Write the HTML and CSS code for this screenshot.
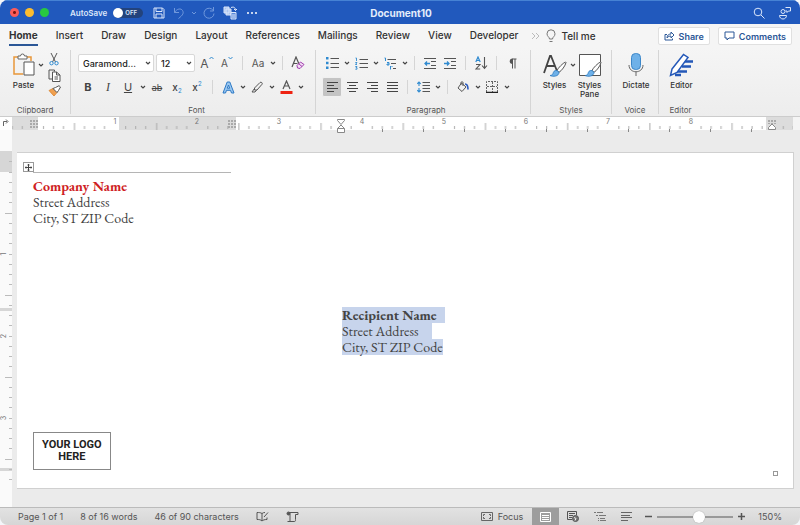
FILE: index.html
```
<!DOCTYPE html>
<html lang="en">
<head>
    <meta charset="UTF-8">
    <meta name="viewport" content="width=device-width, initial-scale=1.0">
    <title>Document10</title>
    <link rel="stylesheet" href="styles.css">
</head>
<body>
    <!-- shared symbols -->
    <svg class="symbols" aria-hidden="true">
        <symbol id="chev" viewBox="0 0 6 6"><path d="M1 2l2 2 2-2" fill="none" stroke="#444" stroke-width="1.2"/></symbol>
        <symbol id="brush" viewBox="0 0 18 16">
            <path d="M16.500 1C14 2 9 7 8 9.500l2 1.800C12.500 10 16.500 4.500 17 1.500z" fill="#fff" stroke="#555"/>
            <path d="M8 9.500C5 9 4.500 11 4 12.500 3.500 14 2 14.500 1 14.500c3 1.500 9 1 9-3.200z" fill="#6fb1e8" stroke="#2878c0" stroke-width=".8"/>
        </symbol>
    </svg>

    <div class="window">
        <header class="titlebar">
            <div class="title-left">
                <div class="lights">
                    <button class="light red" aria-label="Close"></button>
                    <button class="light yellow" aria-label="Minimize"></button>
                    <button class="light green" aria-label="Zoom"></button>
                </div>
                <label class="autosave">AutoSave
                    <span class="switch"><input type="checkbox"><span>OFF</span></span>
                </label>
                <div class="quick">
                    <button aria-label="Save"><svg width="12" height="12" viewBox="0 0 12 12" fill="none" stroke="#dce7fa"><path d="M1 1h8.500L11 2.500V11H1zM3 1v3.500h6V1M3 11V7h6v4"/></svg></button>
                    <button aria-label="Undo"><svg width="12" height="12" viewBox="0 0 12 12" fill="none" stroke="#7098dc"><path d="M1.500 1v4.500H6M1.500 5.500C4 1.500 8 1 9.500 3.500S10 8 5.500 11.500"/></svg></button>
                    <button class="narrow" aria-label="Undo history"><svg width="6" height="6" viewBox="0 0 6 6" fill="none" stroke="#7098dc"><path d="M1 2l2 2 2-2"/></svg></button>
                    <button aria-label="Redo"><svg width="12" height="12" viewBox="0 0 12 12" fill="none" stroke="#7098dc"><path d="M10.500 0v4H7M10.200 3.500A5 5 0 1 0 11 6.500"/></svg></button>
                    <button aria-label="Paste pages"><svg width="14" height="14" viewBox="0 0 14 14" fill="none" stroke="#dce7fa"><path d="M1 1h5v6H1zM3 3h5v6H3z" fill="#a9c4f0"/><path d="M8 6.500h5V13H8z" fill="#5d8ad8"/><path d="M9 9h3M9 11h3M8 1.500c3-1 4.500 0 4.500 3M11 3l1.500 1.500L14 3"/></svg></button>
                    <button aria-label="More"><svg width="12" height="4" viewBox="0 0 12 4" fill="#fff"><circle cx="2" cy="2" r="1"/><circle cx="6" cy="2" r="1"/><circle cx="10" cy="2" r="1"/></svg></button>
                </div>
            </div>
            <h1 class="doc-title">Document10</h1>
            <div class="title-right">
                <button aria-label="Search"><svg width="12" height="12" viewBox="0 0 12 12" fill="none" stroke="#dce7fa"><circle cx="5" cy="5" r="3.800"/><path d="M8 8l3.500 3.500"/></svg></button>
                <button aria-label="Account"><svg width="14" height="14" viewBox="0 0 14 14" fill="none" stroke="#dce7fa"><circle cx="5" cy="5.500" r="2"/><path d="M1.500 9.500h7c0 2-1.500 3.500-3.500 3.500s-3.500-1.500-3.500-3.500zM7.500 1.500h5v3.500h-2L9 6.500V5H7.500"/></svg></button>
            </div>
        </header>

        <nav class="tabs">
            <a class="tab active" href="#home">Home</a>
            <a class="tab" href="#insert">Insert</a>
            <a class="tab" href="#draw">Draw</a>
            <a class="tab" href="#design">Design</a>
            <a class="tab" href="#layout">Layout</a>
            <a class="tab" href="#references">References</a>
            <a class="tab" href="#mailings">Mailings</a>
            <a class="tab" href="#review">Review</a>
            <a class="tab" href="#view">View</a>
            <a class="tab" href="#developer">Developer</a>
            <button class="tell-me">
                <svg width="9" height="8" viewBox="0 0 9 8" fill="none" stroke="#bbb"><path d="M1 1l3 3-3 3M5 1l3 3-3 3"/></svg>
                <svg width="10" height="14" viewBox="0 0 10 14" fill="none" stroke="#777"><path d="M3.500 10C3.500 8 1 7.500 1 4.800a4 4 0 0 1 8 0C9 7.500 6.500 8 6.500 10zM3.500 12.500h3"/></svg>
                Tell me
            </button>
            <div class="tab-actions">
                <button class="pill"><svg width="11" height="10" viewBox="0 0 11 10" fill="none" stroke="#2b5797"><path d="M3 3.500H1V9h7.500V7.500M3 7c0-3 2-4 4-4V1l3 3-3 3V5C5.500 5 4 5.500 3 7z"/></svg>Share</button>
                <button class="pill"><svg width="11" height="10" viewBox="0 0 11 10" fill="none" stroke="#2b5797"><path d="M1 1h9v6H5L3 9V7H1z"/></svg>Comments</button>
            </div>
        </nav>

        <section class="ribbon">
            <div class="group clipboard">
                <div class="group-body">
                    <button class="big">
                        <svg width="24" height="24" viewBox="0 0 24 24" fill="none"><path d="M6 4H2v17h9M15 4h4v4" stroke="#e8973a" stroke-width="1.500"/><path d="M6 6V3h2.500a2 2 0 0 1 4 0H15v3z" fill="#fff" stroke="#666"/><path d="M12 9h10v13H12z" fill="#fff" stroke="#555"/></svg>
                        Paste
                    </button>
                    <svg class="chev big-chev"><use href="#chev"/></svg>
                    <div class="stack">
                        <button aria-label="Cut"><svg width="12" height="13" viewBox="0 0 12 13" fill="none"><path d="M3 0l4.500 9M9 0L4.500 9" stroke="#555"/><circle cx="3.500" cy="10.200" r="1.700" stroke="#2f8ad0"/><circle cx="8.500" cy="10.200" r="1.700" stroke="#2f8ad0"/></svg></button>
                        <button aria-label="Copy"><svg width="13" height="13" viewBox="0 0 13 13" fill="none" stroke="#555"><path d="M4.500 10H1V1h5.500v1.500"/><path d="M4.500 3h4L12 6v6.500H4.500zM8.500 3v3H12M6.500 8H10M6.500 10H10" fill="#fff"/></svg></button>
                        <button aria-label="Format painter"><svg width="13" height="12" viewBox="0 0 13 12"><path d="M1 5.500l5 5.500 3-3.500-4-4z" fill="#f0a050" stroke="#d9822b" stroke-width=".8"/><path d="M5 3.500l4 4 1.500-2L12.500 2 11 .7 7.500 2.500z" fill="#fff" stroke="#555"/></svg></button>
                    </div>
                </div>
                <p class="group-label">Clipboard</p>
            </div>

            <div class="group font">
                <div class="group-rows">
                    <div class="row">
                        <span class="combo family"><select aria-label="Font"><option>Garamond...</option></select><svg class="chev"><use href="#chev"/></svg></span>
                        <span class="combo size"><select aria-label="Font size"><option>12</option></select><svg class="chev"><use href="#chev"/></svg></span>
                        <button class="tool glyph" aria-label="Increase font size">A<svg width="5" height="9" viewBox="0 0 5 9" fill="none" stroke="#2f8ad0"><path d="M.5 3l2-2 2 2"/></svg></button>
                        <button class="tool glyph small" aria-label="Decrease font size">A<svg width="5" height="9" viewBox="0 0 5 9" fill="none" stroke="#2f8ad0"><path d="M.5 1l2 2 2-2"/></svg></button>
                        <i class="sep"></i>
                        <button class="tool glyph small" aria-label="Change case">Aa</button><svg class="chev"><use href="#chev"/></svg>
                        <i class="sep"></i>
                        <button class="tool" aria-label="Clear formatting"><svg width="14" height="14" viewBox="0 0 14 14" fill="none"><path d="M1 11l4-10 3 7M2.500 7.500h4" stroke="#555" stroke-width="1.200"/><path d="M6 9.500L9.500 6 13 8.500 9 12.500 6.500 12z" fill="#f3ddf5" stroke="#a03cae"/><path d="M8 8l3 2.500" stroke="#a03cae"/></svg></button>
                    </div>
                    <div class="row">
                        <button class="tool letter bold">B</button>
                        <button class="tool letter italic">I</button>
                        <button class="tool letter under">U</button><svg class="chev"><use href="#chev"/></svg>
                        <button class="tool letter strike">ab</button>
                        <button class="tool letter script" aria-label="Subscript">x<sub>2</sub></button>
                        <button class="tool letter script" aria-label="Superscript">x<sup>2</sup></button>
                        <i class="sep"></i>
                        <button class="tool" aria-label="Text effects"><svg width="13" height="13" viewBox="0 0 13 13"><path d="M1 12L5.200 1h2.600L12 12H9.500l-1-2.700h-4L3.500 12zM5.300 7.200h2.400L6.500 4z" fill="#9cc8f0" stroke="#2b78c5"/></svg></button><svg class="chev"><use href="#chev"/></svg>
                        <button class="tool" aria-label="Highlight"><svg width="13" height="12" viewBox="0 0 13 12" fill="none" stroke="#555"><path d="M3.500 7L9 1.500c1-1 3 .5 2 1.800L6 9H3.500zM3.500 7.500L1 11h3l1.500-2"/></svg></button><svg class="chev"><use href="#chev"/></svg>
                        <button class="tool" aria-label="Font color"><svg width="13" height="14" viewBox="0 0 13 14" fill="none"><path d="M3 9l3.500-8L10 9M4.200 6h4.600" stroke="#555" stroke-width="1.200"/><path d="M.5 11h12v3H.5z" fill="#ee2312"/></svg></button><svg class="chev"><use href="#chev"/></svg>
                    </div>
                </div>
                <p class="group-label">Font</p>
            </div>

            <div class="group paragraph">
                <div class="group-rows">
                    <div class="row">
                        <button class="tool" aria-label="Bullets"><svg width="13" height="12" viewBox="0 0 13 12"><path d="M0 0h2.500v2.500H0zM0 4.800h2.500v2.500H0zM0 9.500h2.500V12H0z" fill="#2f8ad0"/><path d="M4.500 1.500H13M4.500 6.500H13M4.500 10.500H13" stroke="#555"/></svg></button><svg class="chev"><use href="#chev"/></svg>
                        <button class="tool" aria-label="Numbering"><svg width="13" height="13" viewBox="0 0 13 13" fill="none"><path d="M.5 1h1v3M.3 5.500h1.700L.5 7.500H2M.3 9.500H2l-1 1.200h1v1.500H.3" stroke="#2f8ad0" stroke-width=".9"/><path d="M4.500 2.500H13M4.500 6.500H13M4.500 10.500H13" stroke="#555"/></svg></button><svg class="chev"><use href="#chev"/></svg>
                        <button class="tool" aria-label="Multilevel list"><svg width="13" height="13" viewBox="0 0 13 13" fill="none"><path d="M.5 1h1v3M3 5.500h2V8H3V7h2M6.500 9v3.500M8 9v1" stroke="#2f8ad0"/><path d="M3.500 2.500H12M7 6.500h5M9 11.500h3" stroke="#555"/></svg></button><svg class="chev"><use href="#chev"/></svg>
                        <i class="sep"></i>
                        <button class="tool" aria-label="Decrease indent"><svg width="12" height="11" viewBox="0 0 12 11" fill="none"><path d="M0 .5h12M7 3.500h5M7 7.500h5M0 10.500h12" stroke="#555"/><path d="M6 5.500H1M3 3.500l-2 2 2 2" stroke="#2f8ad0" stroke-width="1.300"/></svg></button>
                        <button class="tool" aria-label="Increase indent"><svg width="12" height="11" viewBox="0 0 12 11" fill="none"><path d="M0 .5h12M7 3.500h5M7 7.500h5M0 10.500h12" stroke="#555"/><path d="M0 5.500h5M3 3.500l2 2-2 2" stroke="#2f8ad0" stroke-width="1.300"/></svg></button>
                        <i class="sep"></i>
                        <button class="tool" aria-label="Sort"><svg width="13" height="14" viewBox="0 0 13 14" fill="none"><path d="M.8 6L3 1l2.200 5M1.500 4.500h3" stroke="#2f8ad0" stroke-width="1.200"/><path d="M1 8.500h4L1 13h4.200M9.500 1v11M7 9.500l2.500 2.800L12 9.500" stroke="#555" stroke-width="1.100"/></svg></button>
                        <i class="sep"></i>
                        <button class="tool" aria-label="Show marks"><svg width="9" height="11" viewBox="0 0 9 11"><path d="M4 1h4.500M4.500 1v9.500M7 1v9.500" stroke="#555"/><path d="M4.500.5v5.500a2.750 2.750 0 0 1 0-5.500z" fill="#555"/></svg></button>
                    </div>
                    <div class="row">
                        <button class="tool pressed" aria-label="Align left"><svg width="11" height="11" viewBox="0 0 11 11" stroke="#444"><path d="M0 .5h11M0 3.500h7M0 6.500h11M0 9.500h7"/></svg></button>
                        <button class="tool" aria-label="Center"><svg width="11" height="11" viewBox="0 0 11 11" stroke="#444"><path d="M0 .5h11M2 3.500h7M0 6.500h11M2 9.500h7"/></svg></button>
                        <button class="tool" aria-label="Align right"><svg width="11" height="11" viewBox="0 0 11 11" stroke="#444"><path d="M0 .5h11M4 3.500h7M0 6.500h11M4 9.500h7"/></svg></button>
                        <button class="tool" aria-label="Justify"><svg width="11" height="11" viewBox="0 0 11 11" stroke="#444"><path d="M0 .5h11M0 3.500h11M0 6.500h11M0 9.500h11"/></svg></button>
                        <i class="sep"></i>
                        <button class="tool" aria-label="Line spacing"><svg width="13" height="12" viewBox="0 0 13 12" fill="none"><path d="M5.500 1.500H13M5.500 4.500H13M5.500 7.500H13M5.500 10.500H13" stroke="#555"/><path d="M2 1v4M.3 2.800L2 1l1.700 1.800M2 7v4M.3 9.200L2 11l1.700-1.800" stroke="#2f8ad0" stroke-width="1.100"/></svg></button><svg class="chev"><use href="#chev"/></svg>
                        <i class="sep"></i>
                        <button class="tool" aria-label="Shading"><svg width="12" height="12" viewBox="0 0 12 12" fill="none"><path d="M4.500 2L1 7l4 3.500L9 6zM4 4V1.500C4 .5 6 .5 6 1.500V5" stroke="#555"/><path d="M8 3c2 0 3 1.500 3 5.500" stroke="#2b5bbf" stroke-width="1.600"/></svg></button><svg class="chev"><use href="#chev"/></svg>
                        <button class="tool" aria-label="Borders"><svg width="12" height="12" viewBox="0 0 12 12" fill="none" stroke="#666"><path d="M.5 11V.5h11V11M6.500 1v10M1 5.500h10" stroke-dasharray="2 1"/><path d="M0 11.500h12" stroke="#222" stroke-width="1.500"/></svg></button><svg class="chev"><use href="#chev"/></svg>
                    </div>
                </div>
                <p class="group-label">Paragraph</p>
            </div>

            <div class="group styles">
                <div class="group-body">
                    <button class="big">
                        <svg width="26" height="24" viewBox="0 0 26 24"><path d="M2 20L8 3h1l6 15M4.500 13h8" fill="none" stroke="#444" stroke-width="1.800"/><use href="#brush" x="7" y="8" width="18" height="16"/></svg>
                        Styles
                    </button>
                    <svg class="chev big-chev"><use href="#chev"/></svg>
                    <button class="big">
                        <svg width="26" height="24" viewBox="0 0 26 24"><path d="M2.500 1.500h21v21h-21z" fill="#fff" stroke="#555"/><use href="#brush" x="7" y="8" width="18" height="16"/></svg>
                        <span>Styles<br>Pane</span>
                    </button>
                </div>
                <p class="group-label">Styles</p>
            </div>

            <div class="group voice">
                <div class="group-body">
                    <button class="big">
                        <svg width="26" height="24" viewBox="0 0 26 24" fill="none"><rect x="8.500" y=".5" width="9" height="16" rx="4" fill="#6fb1e8" stroke="#3d87c9"/><path d="M6 12c0 9 14 9 14 0M13 19v4" stroke="#666"/></svg>
                        Dictate
                    </button>
                </div>
                <p class="group-label">Voice</p>
            </div>

            <div class="group editor">
                <div class="group-body">
                    <button class="big">
                        <svg width="26" height="24" viewBox="0 0 26 24" fill="none"><path d="M15 8.500h9M13 13.500h9M8 18.500h10M6 22h6" stroke="#2458b8" stroke-width="2.500"/><path d="M3 16L14.500 1.500l4.500 3L8 19.500 1.500 22.500z" fill="#fff" stroke="#2458b8" stroke-width="1.500"/></svg>
                        Editor
                    </button>
                </div>
                <p class="group-label">Editor</p>
            </div>
        </section>

        <!-- one inch on the rulers is 82 units -->
        <div class="h-ruler">
            <svg width="100%" height="17">
                <defs>
                    <pattern id="inch" x="33" width="82.200" height="17" patternUnits="userSpaceOnUse">
                        <path d="M10.500 9v3M20.500 9v3M30.500 9v3M41.500 6v7M51.500 9v3M61.500 9v3M71.500 9v3" stroke="#aaa"/>
                    </pattern>
                    <pattern id="stops" x="341" width="41" height="17" patternUnits="userSpaceOnUse"><path d="M.5 12v3" stroke="#888"/></pattern>
                    <pattern id="dots" width="3" height="3" patternUnits="userSpaceOnUse"><path d="M0 0h2v2H0z" fill="#aaa"/></pattern>
                </defs>
                <path d="M0 0h793v13H0z" fill="#fff"/>
                <path d="M12 0h26v13H12zM119 0h117v13H119zM766 0h27v13h-27z" fill="#dcdcdc"/>
                <path d="M12 0h781v13H12z" fill="url(#inch)"/>
                <path d="M380 0h380v17H380z" fill="url(#stops)"/>
                <path d="M30 3h8v8h-8zM228 3h8v8h-8zM768 3h8v4h-8z" fill="url(#dots)"/>
                <path d="M3.500 9V4.500H7M6 2.500l2 2-2 2" fill="none" stroke="#666"/>
                <g class="ticks">
                    <text x="115" y="7">1</text><text x="197" y="7">2</text><text x="279" y="7">3</text><text x="362" y="7">4</text>
                    <text x="444" y="7">5</text><text x="526" y="7">6</text><text x="608" y="7">7</text><text x="691" y="7">8</text>
                </g>
                <path d="M337.500 2.500h7v1L341 7.500l-3.500-4zM337.500 15.500v-4L341 8l3.500 3.500v4zM337.500 11.500h7" fill="#fff" stroke="#888"/>
                <path d="M768.500 12.500v-2L772 7l3.500 3.500v2z" fill="#fff" stroke="#888"/>
            </svg>
        </div>

        <main class="workspace">
            <div class="v-ruler">
                <svg width="12" height="100%">
                    <defs>
                        <pattern id="vinch" y="42" width="12" height="82" patternUnits="userSpaceOnUse">
                            <path d="M9 .5h3M9 10.500h3M9 20.500h3M9 30.500h3M5 41.500h7M9 51.500h3M9 61.500h3M9 71.500h3" stroke="#bbb"/>
                        </pattern>
                    </defs>
                    <path d="M0 21h12v21H0zM0 178h12v3H0zM0 338h12v3H0z" fill="#d6d6d6"/>
                    <rect y="31" width="12" height="320" fill="url(#vinch)"/>
                    <g class="ticks">
                        <text transform="translate(6 124) rotate(-90)">1</text>
                        <text transform="translate(6 206) rotate(-90)">2</text>
                        <text transform="translate(6 288) rotate(-90)">3</text>
                    </g>
                </svg>
            </div>
            <article class="page">
                <div class="table-top">
                    <button class="handle" aria-label="Select table"><svg width="7" height="7" viewBox="0 0 7 7" stroke="#444"><path d="M3.500 0v7M0 3.500h7M2.500 1h2M2.500 6h2M1 2.500v2M6 2.500v2"/></svg></button>
                </div>
                <address class="sender">
                    <strong>Company Name</strong><br>
                    Street Address<br>
                    City, ST ZIP Code
                </address>
                <address class="recipient">
                    <span class="name">Recipient Name</span>
                    <span class="street">Street Address</span>
                    <span>City, ST ZIP Code</span>
                </address>
                <div class="page-foot">
                    <div class="logo">YOUR LOGO<br>HERE</div>
                    <span class="table-end"></span>
                </div>
            </article>
        </main>

        <footer class="status">
            <span>Page 1 of 1</span>
            <span>8 of 16 words</span>
            <span>46 of 90 characters</span>
            <button aria-label="Proofing"><svg width="13" height="11" viewBox="0 0 13 11" fill="none" stroke="#555"><path d="M6 10V2.500C4.500 1.500 3 1.500 1 1.500v7c2 0 3.500 0 5 1.500 1-1 2.500-1.500 5-1.500V6.500M6 2.500c1-.8 2-1 3-1M8 6l4-4.500"/></svg></button>
            <button aria-label="Macros"><svg width="13" height="12" viewBox="0 0 13 12" fill="none" stroke="#555"><path d="M3 1.500h9v2H9.500v5M4 2.500v8M1.500 10.500h7c1 0 1-1 1-2"/><circle cx="2.500" cy="2.500" r="1.500" fill="#555"/></svg></button>
            <div class="views">
                <button class="focus"><svg width="12" height="9" viewBox="0 0 12 9" fill="none" stroke="#666"><path d="M.5.5h11v8H.5z"/><path d="M2.500 4V2.500H4M8 2.500h1.500V4M9.500 5v1.500H8M4 6.500H2.500V5"/></svg>Focus</button>
                <button class="view current" aria-label="Print layout"><svg width="11" height="10" viewBox="0 0 11 10" fill="none" stroke="#fff"><path d="M.5.5h10v9H.5zM2 3.500h7M2 5.500h7M2 7.500h7"/></svg></button>
                <button class="view" aria-label="Web layout"><svg width="12" height="11" viewBox="0 0 12 11" fill="none" stroke="#555"><path d="M5 8.500H.5v-8h9V4M2 2.500h6M2 4.500h4M2 6.500h3"/><circle cx="8.500" cy="7.500" r="3" fill="#777"/><path d="M7 6.500l2 1-1 2" stroke="#eee"/></svg></button>
                <button class="view" aria-label="Outline"><svg width="12" height="9" viewBox="0 0 12 9" stroke="#777"><path d="M0 .5h2M3 .5h6M2 3.500h2M5 3.500h7M4 6.500h1M6 6.500h5M4 8.500h1M6 8.500h6"/></svg></button>
                <button class="view" aria-label="Draft"><svg width="11" height="9" viewBox="0 0 11 9" stroke="#666"><path d="M0 .5h11M0 3.500h9M0 5.500h11M0 8.500h7"/></svg></button>
                <button class="step" aria-label="Zoom out"><svg width="7" height="7" viewBox="0 0 7 7"><path d="M0 3.500h7" stroke="#555" stroke-width="1.500"/></svg></button>
                <input class="zoom" type="range" min="10" max="250" value="144" aria-label="Zoom">
                <button class="step" aria-label="Zoom in"><svg width="7" height="7" viewBox="0 0 7 7"><path d="M0 3.500h7M3.500 0v7" stroke="#555" stroke-width="1.500"/></svg></button>
                <span class="percent">150%</span>
            </div>
        </footer>
    </div>
</body>
</html>
```
FILE: styles.css
```
* {
    margin: 0;
    padding: 0;
    box-sizing: border-box;
}

body {
    background: #f4f6fa;
    font-family: Inter, "Liberation Sans", sans-serif;
    font-size: 9px;
    color: #333;
}

button {
    display: flex;
    align-items: center;
    justify-content: center;
    border: none;
    background: none;
    font: inherit;
    color: inherit;
}

svg {
    flex: none;
    display: block;
}

.symbols {
    position: absolute;
    width: 0;
    height: 0;
}

.window {
    display: flex;
    flex-direction: column;
    min-height: 100vh;
    border-radius: 8px;
    overflow: hidden;
    background: #f4f4f4;
}

/* title bar */

.titlebar {
    display: grid;
    grid-template-columns: 1fr auto 1fr;
    align-items: center;
    height: 24px;
    padding: 0 8px 0 10px;
    background: #2159bd;
    border-top: 1px solid #4682d4;
    color: #fff;
}

.title-left,
.title-right,
.lights,
.quick,
.autosave {
    display: flex;
    align-items: center;
}

.lights {
    gap: 6px;
}

.light {
    width: 9px;
    height: 9px;
    border-radius: 50%;
}

.red {
    background: radial-gradient(circle, #7c1410 1px, #fc5b57 2px);
}

.yellow {
    background: #fdbc2e;
}

.green {
    background: #28c840;
}

.autosave {
    gap: 6px;
    margin-left: 21px;
    font-size: 8px;
    font-weight: 600;
    color: #dce7fa;
}

.switch {
    display: grid;
    align-items: center;
    width: 30px;
}

.switch input,
.switch span {
    grid-area: 1 / 1;
}

.switch span {
    padding-left: 12px;
    font-size: 6px;
}

.switch input {
    appearance: none;
    height: 10px;
    border-radius: 5px;
    background: #23437c;
}

.switch input::before {
    content: "";
    display: block;
    width: 10px;
    height: 10px;
    border-radius: 50%;
    background: #fff;
}

.quick {
    margin-left: 6px;
}

.quick button {
    width: 20px;
}

.quick button:nth-last-child(-n+2) {
    width: 22px;
}

.quick .narrow {
    width: 10px;
}

.doc-title {
    font-size: 10px;
    font-weight: 700;
    color: #e4edfb;
}

.title-right {
    justify-content: flex-end;
    gap: 13px;
}

/* tabs */

.tabs {
    display: flex;
    align-items: center;
    height: 24px;
    padding: 0 8px 0 9px;
    gap: 18px;
    background: #f5f5f5;
    font-size: 10px;
    font-weight: 500;
}

.tab {
    padding: 2px 0 2px;
    line-height: 14px;
    border-bottom: 2px solid transparent;
    color: #333;
    text-decoration: none;
}

.tab.active {
    font-weight: 700;
    border-color: #2b5797;
}

.tell-me {
    gap: 6px;
    margin-left: -6px;
}

.tab-actions {
    display: flex;
    gap: 8px;
    margin-left: auto;
}

.pill {
    gap: 4px;
    height: 18px;
    padding: 0 5px;
    border: 1px solid #e0e0e0;
    border-radius: 2px;
    background: #fff;
    color: #2b5797;
    font-size: 9px;
    font-weight: 600;
}

/* ribbon */

.ribbon {
    display: flex;
    height: 68px;
    padding: 2px 0 0;
    background: linear-gradient(#f5f5f5, #ededed);
}

.group {
    display: flex;
    flex-direction: column;
    justify-content: space-between;
    height: 64px;
    border-right: 1px solid #d5d5d5;
}

.group:last-child {
    border-right: none;
}

.group-label {
    font-size: 8px;
    line-height: 8px;
    text-align: center;
    color: #555;
}

.group-body {
    display: flex;
    align-items: flex-start;
    justify-content: center;
    padding: 3px 0 0 2px;
}

.group-rows {
    display: flex;
    flex-direction: column;
    gap: 4px;
    padding-top: 3px;
}

.row {
    display: flex;
    align-items: center;
    height: 20px;
}

.clipboard {
    width: 71px;
}

.font {
    width: 245px;
    padding-left: 7px;
}

.paragraph {
    width: 215px;
    padding-left: 6px;
}

.styles {
    width: 81px;
}

.voice {
    width: 47px;
}

.editor {
    width: 43px;
}

.big {
    flex-direction: column;
    font-size: 8px;
    font-weight: 500;
    line-height: 9px;
    gap: 4px;
}

.chev {
    width: 6px;
    height: 6px;
    margin: 0 1px 0 2px;
}

.big-chev {
    margin-top: 9px;
}

.stack {
    display: flex;
    flex-direction: column;
    gap: 3px;
    margin-left: 3px;
}

.combo {
    display: grid;
    align-items: center;
    margin-right: 2px;
}

.combo select,
.combo .chev {
    grid-area: 1 / 1;
}

.combo select {
    appearance: none;
    width: 100%;
    height: 18px;
    padding-left: 4px;
    border: 1px solid #d8d8d8;
    border-radius: 2px;
    background: #fff;
    font: inherit;
    font-weight: 500;
    color: #222;
}

.combo .chev {
    justify-self: end;
    margin-right: 3px;
}

.family {
    width: 76px;
}

.size {
    width: 39px;
}

.tool {
    width: 20px;
    height: 20px;
}

.glyph {
    font-size: 12px;
    color: #555;
}

.glyph svg {
    margin-bottom: 6px;
}

.small {
    font-size: 10px;
}

.letter {
    font-size: 11px;
    color: #444;
}

.bold {
    font-weight: 700;
}

.italic {
    font-family: "Liberation Serif", serif;
    font-size: 12px;
    font-style: italic;
}

.under {
    text-decoration: underline;
}

.strike {
    font-size: 9px;
    text-decoration: line-through;
}

.script {
    font-size: 10px;
    font-weight: 500;
}

.script sub,
.script sup {
    font-size: 6px;
    line-height: 6px;
    color: #2f8ad0;
}

.script sub {
    padding-top: 8px;
}

.script sup {
    padding-bottom: 7px;
}

.pressed {
    background: #c4c4c4;
    border: 1px solid #f0f0f0;
    border-radius: 2px;
}

.sep {
    width: 1px;
    height: 14px;
    margin: 0 5px;
    background: #d5d5d5;
}

/* rulers and page */

.h-ruler {
    position: relative;
    border-top: 1px solid #ccc;
}

.ticks {
    font-size: 7px;
    fill: #777;
    text-anchor: middle;
}

.workspace {
    flex: 1;
    display: flex;
    margin-top: -4px;
    background: #ebebeb;
}

.v-ruler {
    width: 12px;
    background: #fafafa;
}

.page {
    flex: 1;
    display: flex;
    flex-direction: column;
    margin: 22px 6px 18px 5px;
    padding: 9px 15px 12px 16px;
    background: #fff;
    border: 1px solid #d0d0d0;
    border-width: 1px 1px 1px 0;
    font-family: "EB Garamond", Garamond, "Liberation Serif", serif;
    font-size: 14px;
    line-height: 16px;
    color: #444;
}

.table-top {
    display: flex;
    width: 198px;
    border-bottom: 1px solid #b5b5b5;
}

.handle {
    width: 11px;
    height: 10px;
    margin-left: -10px;
    border: 1px solid #999;
}

.sender,
.recipient {
    font-style: normal;
}

.sender {
    margin-top: 5px;
}

.sender strong {
    color: #cf1f25;
}

.recipient {
    display: flex;
    flex-direction: column;
    align-items: flex-start;
    margin: 81px 0 0 309px;
}

.recipient span {
    background: #c7d4ec;
}

.recipient .name {
    padding-right: 8px;
    font-weight: 700;
}

.recipient .street {
    padding-right: 13px;
}

.page-foot {
    display: flex;
    justify-content: space-between;
    align-items: flex-end;
    margin-top: auto;
}

.logo {
    margin-bottom: 6px;
    padding: 6px 8px;
    border: 1px solid #888;
    font-family: Roboto, sans-serif;
    font-size: 11px;
    font-weight: 700;
    line-height: 12px;
    text-align: center;
    color: #222;
}

.table-end {
    width: 5px;
    height: 5px;
    border: 1px solid #999;
}

/* status bar */

.status {
    display: flex;
    align-items: center;
    gap: 17px;
    height: 18px;
    padding: 0 18px;
    border-top: 1px solid #bbb;
    background: linear-gradient(#e2e2e2, #d6d6d6);
    color: #555;
}

.views {
    display: flex;
    align-items: center;
    align-self: stretch;
    margin-left: auto;
}

.focus {
    gap: 5px;
    margin-right: 9px;
}

.view {
    width: 27px;
    align-self: stretch;
}

.current {
    background: #9d9d9d;
}

.step {
    width: 17px;
}

.zoom {
    appearance: none;
    width: 76px;
    height: 12px;
    background: linear-gradient(#999, #999) center / 100% 2px no-repeat;
}

.zoom::-webkit-slider-thumb {
    appearance: none;
    width: 12px;
    height: 12px;
    border-radius: 50%;
    background: #fff;
    box-shadow: 0 0 1px #888;
}

.percent {
    margin-left: 8px;
}
```
